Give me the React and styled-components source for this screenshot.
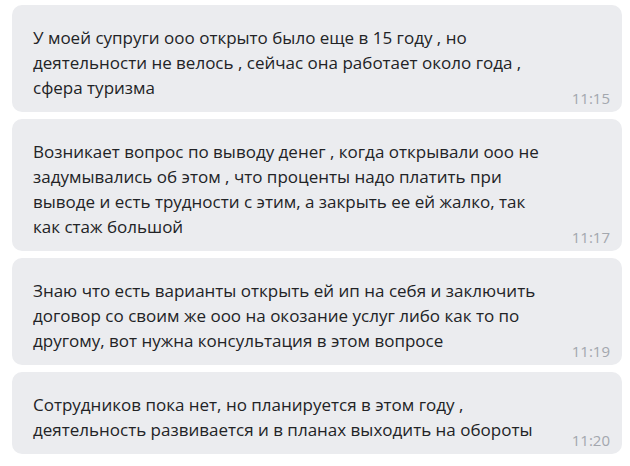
import React from "react";
import styled, { createGlobalStyle } from "styled-components";

const GlobalStyle = createGlobalStyle`
  body {
    margin: 0;
    background: #ffffff;
    font-family: "Open Sans", "Noto Sans", sans-serif;
  }
`;

const Feed = styled.div`
  display: flex;
  flex-direction: column;
  gap: 7px;
  padding: 5px 8px 0 12px;
`;

const Bubble = styled.div`
  background: #ebecef;
  border-radius: 10px;
  padding: 20px 12px 5px 21px;
`;

const Text = styled.div`
  font-size: 17px;
  line-height: 25px;
  color: #222326;
  white-space: pre-line;
`;

const Time = styled.div`
  margin-top: -11px;
  text-align: right;
  font-size: 15px;
  line-height: 18px;
  color: #a3a7ae;
`;

const messages = [
  {
    text: "У моей супруги ооо открыто было еще в 15 году , но\nдеятельности не велось , сейчас она работает около года ,\nсфера туризма",
    time: "11:15",
  },
  {
    text: "Возникает вопрос по выводу денег , когда открывали ооо не\nзадумывались об этом , что проценты надо платить при\nвыводе и есть трудности с этим, а закрыть ее ей жалко, так\nкак стаж большой",
    time: "11:17",
  },
  {
    text: "Знаю что есть варианты открыть ей ип на себя и заключить\nдоговор со своим же ооо на окозание услуг либо как то по\nдругому, вот нужна консультация в этом вопросе",
    time: "11:19",
  },
  {
    text: "Сотрудников пока нет, но планируется в этом году ,\nдеятельность развивается и в планах выходить на обороты",
    time: "11:20",
  },
];

export default function App() {
  return (
    <>
      <GlobalStyle />
      <Feed>
        {messages.map((m) => (
          <Bubble key={m.time}>
            <Text>{m.text}</Text>
            <Time>{m.time}</Time>
          </Bubble>
        ))}
      </Feed>
    </>
  );
}
